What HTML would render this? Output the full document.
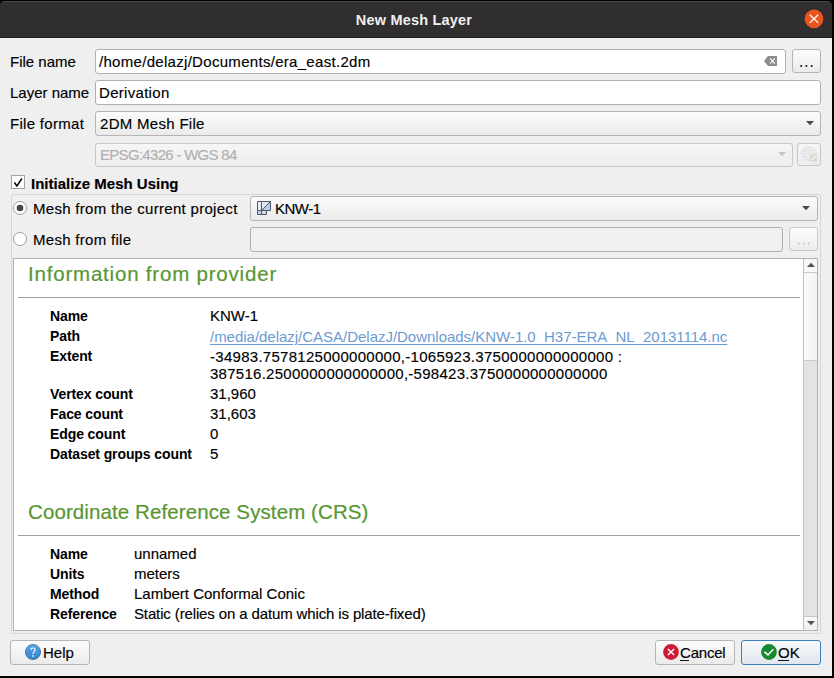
<!DOCTYPE html>
<html><head><meta charset="utf-8">
<style>
*{box-sizing:border-box;margin:0;padding:0}
html,body{width:834px;height:678px;overflow:hidden;background:#000}
body{position:relative;font-family:"Liberation Sans",sans-serif;font-size:15px;color:#111}
.a{position:absolute}
.t{position:absolute;white-space:nowrap;line-height:15px;font-size:15px;letter-spacing:0.3px;color:#000;-webkit-text-stroke:0.15px}
.l{position:absolute;white-space:nowrap;line-height:14px;font-size:14px;font-weight:bold;color:#000;letter-spacing:-0.1px}
.v{position:absolute;white-space:nowrap;line-height:15px;font-size:15px;color:#000;-webkit-text-stroke:0.15px}
.h{position:absolute;white-space:nowrap;line-height:20px;font-size:20.5px;color:#589632;-webkit-text-stroke:0.2px}
#title{left:0;top:1px;width:832px;height:37px;background:#302e2f;border-radius:5px 5px 0 0;border-top:1px solid #4b494a;border-bottom:1px solid #1f1e1f}
#body{left:0;top:38px;width:832px;height:638px;background:#efefef}
.inp{position:absolute;background:#fff;border:1px solid #b0b0b0;border-radius:3px}
.btn{position:absolute;background:linear-gradient(#fcfcfc,#ebebeb);border:1px solid #b5b5b5;border-radius:3px}
.dis{position:absolute;background:#f0f0f0;border:1px solid #c7c7c7;border-radius:3px}
svg{position:absolute;overflow:visible}
</style></head><body>
<div id="title" class="a"></div>
<div class="a" style="left:0;top:13px;width:832px;text-align:center;color:#f0f0f0;font-weight:bold;font-size:14.5px;line-height:15px;letter-spacing:0.2px;margin-left:-2px">New Mesh Layer</div>
<svg style="left:800px;top:4px" width="28" height="28" viewBox="0 0 28 28"><circle cx="14" cy="14.8" r="9.4" fill="#e95420"/><path d="M9.8 10.8L18.2 18.9M18.2 10.8L9.8 18.9" stroke="#fff" stroke-width="1.3"/></svg>
<div id="body" class="a"></div>

<!-- File name row -->
<div class="t" style="left:10px;top:54px;letter-spacing:0">File name</div>
<div class="inp" style="left:95px;top:49px;width:691px;height:25px"></div>
<div class="t" style="left:99px;top:54px">/home/delazj/Documents/era_east.2dm</div>
<svg style="left:764px;top:56px" width="14" height="10" viewBox="0 0 14 10"><path d="M0 5L4 0H13V10H4Z" fill="#8d8d8d"/><path d="M6.2 2.3L10.8 7.7M10.8 2.3L6.2 7.7" stroke="#fff" stroke-width="1.05"/></svg>
<div class="btn" style="left:792px;top:49px;width:29px;height:24px"></div>
<svg style="left:799px;top:64px" width="16" height="4" viewBox="0 0 16 4"><circle cx="2.2" cy="2" r="1" fill="#111"/><circle cx="7.4" cy="2" r="1" fill="#111"/><circle cx="12.7" cy="2" r="1" fill="#111"/></svg>

<!-- Layer name row -->
<div class="t" style="left:10px;top:85px;letter-spacing:0">Layer name</div>
<div class="inp" style="left:95px;top:80px;width:726px;height:25px"></div>
<div class="t" style="left:99px;top:85px">Derivation</div>

<!-- File format row -->
<div class="t" style="left:10px;top:116px">File format</div>
<div class="btn" style="left:95px;top:111px;width:726px;height:25px"></div>
<div class="t" style="left:100px;top:116px">2DM Mesh File</div>
<svg style="left:806px;top:121px" width="8" height="4" viewBox="0 0 8 4"><path d="M0 0H8L4 4.3Z" fill="#4a4a4a"/></svg>

<!-- CRS row -->
<div class="dis" style="left:95px;top:143px;width:698px;height:24px;background:linear-gradient(#f6f6f6,#ededed)"></div>
<div class="t" style="left:100px;top:147px;color:#b0b0b0;letter-spacing:-0.7px">EPSG:4326 - WGS 84</div>
<svg style="left:778px;top:152px" width="8" height="4" viewBox="0 0 8 4"><path d="M0 0H8L4 4.3Z" fill="#c6c6c6"/></svg>
<div class="dis" style="left:797px;top:143px;width:24px;height:23px;background:linear-gradient(#f6f6f6,#ededed)"></div>
<svg style="left:797px;top:143px" width="24" height="24" viewBox="0 0 24 24"><path d="M4.2 10.5C5 6 8.5 4 12 4C15.5 4 19 6 19.8 10.5C18.5 11.2 18 12 17.5 13C16.5 16.5 14.5 17.5 12 17.5C9 17.5 6.8 15.5 6.2 12.3C5.6 11.5 5 11 4.2 10.5Z" fill="#eceeef" stroke="#dadada" stroke-width="0.7"/><path d="M4.5 10.5H19.5M6 7.5H18M6.5 13.5H17M12 4V17.5M8.5 5C7.5 9 8 14 10 17M15.5 5C16.5 9 16 14 14 17" stroke="#d6d6d6" stroke-width="0.6" fill="none" stroke-dasharray="1 0.7"/><rect x="13" y="11.7" width="6.8" height="6.8" fill="#d9d6cc"/><path d="M14.5 17L18.5 13" stroke="#fafafa" stroke-width="1.2"/></svg>

<!-- Initialize checkbox -->
<div class="a" style="left:11px;top:175px;width:14px;height:14px;background:#fff;border:1px solid #a4a4a4"></div>
<svg style="left:13px;top:177px" width="10" height="10" viewBox="0 0 10 10"><path d="M1.4 5.5L3.9 9L8.9 1.5" stroke="#000" stroke-width="1.45" fill="none"/></svg>
<div class="t" style="left:31px;top:176px;font-weight:bold;letter-spacing:0">Initialize Mesh Using</div>

<!-- group box -->
<div class="a" style="left:11px;top:194px;width:810px;height:440px;border:1px solid #d6d6d6;border-radius:2px"></div>
<svg style="left:13px;top:201px" width="14" height="14" viewBox="0 0 14 14"><circle cx="7" cy="7" r="6.5" fill="#fff" stroke="#a0a0a0" stroke-width="1"/><circle cx="7" cy="7" r="3.3" fill="#444"/></svg>
<div class="t" style="left:33px;top:201px">Mesh from the current project</div>
<div class="btn" style="left:250px;top:196px;width:568px;height:25px"></div>
<svg style="left:257px;top:201px" width="14" height="14" viewBox="0 0 14 14"><rect x="0.5" y="0.5" width="4" height="9" fill="#e9eef4"/><path d="M4.5 0.5H13.5V9.5H4.5Z" fill="#b8cee6"/><path d="M4.5 0.5H13.5L4.5 9.5Z" fill="#dfe8f2"/><rect x="0.5" y="9.5" width="4" height="4" fill="#bcd2ea"/><rect x="4.5" y="9.5" width="5" height="4" fill="#d8d8d8"/><path d="M0.5 13.5V0.5H13.5V9.5H9.5V13.5Z" fill="none" stroke="#4f5b6b" stroke-width="1"/><path d="M4.5 0.5V13.5M0.5 9.5H9.5M4.5 9.5L13.5 0.5" stroke="#4f5b6b" stroke-width="1"/></svg>
<div class="t" style="left:275px;top:201px;letter-spacing:-0.5px">KNW-1</div>
<svg style="left:802px;top:206px" width="8" height="4" viewBox="0 0 8 4"><path d="M0 0H8L4 4.3Z" fill="#4a4a4a"/></svg>

<svg style="left:13px;top:232px" width="14" height="14" viewBox="0 0 14 14"><circle cx="7" cy="7" r="6.5" fill="#fff" stroke="#a0a0a0" stroke-width="1"/></svg>
<div class="t" style="left:33px;top:232px">Mesh from file</div>
<div class="dis" style="left:250px;top:227px;width:533px;height:25px;border-color:#aeaeae"></div>
<div class="dis" style="left:789px;top:227px;width:29px;height:24px;background:linear-gradient(#fdfdfd,#ececec)"></div>
<svg style="left:797px;top:242px" width="14" height="3" viewBox="0 0 14 3"><circle cx="1.8" cy="1.5" r="0.9" fill="#b9c3cc"/><circle cx="6.8" cy="1.5" r="0.9" fill="#b9c3cc"/><circle cx="11.6" cy="1.5" r="0.9" fill="#b9c3cc"/></svg>

<!-- info panel -->
<div class="a" style="left:13px;top:258px;width:805px;height:373px;background:#fff;border:1px solid #b2b2b2"></div>
<!-- scrollbar -->
<div class="a" style="left:803px;top:259px;width:14px;height:371px;background:#e3e3e3;border-left:1px solid #c0c0c0"></div>
<div class="a" style="left:804px;top:259px;width:13px;height:14px;background:#f8f8f8;border-bottom:1px solid #c8c8c8"></div>
<svg style="left:806.5px;top:263px" width="8" height="4" viewBox="0 0 8 4"><path d="M0 4H8L4 -0.3Z" fill="#555"/></svg>
<div class="a" style="left:804px;top:273px;width:13px;height:88px;background:linear-gradient(90deg,#fbfbfb,#f2f2f2);border-bottom:1px solid #c8c8c8"></div>
<div class="a" style="left:804px;top:616px;width:13px;height:14px;background:linear-gradient(#f8f8f8,#f0f0f0);border-top:1px solid #c8c8c8"></div>
<svg style="left:807px;top:621px" width="8" height="4" viewBox="0 0 8 4"><path d="M0 0H8L4 4.3Z" fill="#555"/></svg>

<div class="h" style="left:28px;top:264px;letter-spacing:0.8px">Information from provider</div>
<div class="a" style="left:18px;top:297px;width:782px;height:1px;background:#a0a0a0"></div>

<div class="l" style="left:50px;top:309px">Name</div>
<div class="v" style="left:210px;top:308px">KNW-1</div>
<div class="l" style="left:50px;top:329px">Path</div>
<div class="v" style="left:210px;top:329px;color:#6b9bd2;text-decoration:underline;text-underline-offset:1.6px;-webkit-text-stroke:0;letter-spacing:-0.02px">/media/delazj/CASA/DelazJ/Downloads/KNW-1.0_H37-ERA_NL_20131114.nc</div>
<div class="l" style="left:50px;top:349px">Extent</div>
<div class="v" style="left:210px;top:349px;letter-spacing:0.28px">-34983.7578125000000000,-1065923.3750000000000000 :</div>
<div class="v" style="left:210px;top:366px;letter-spacing:0.27px">387516.2500000000000000,-598423.3750000000000000</div>
<div class="l" style="left:50px;top:387px">Vertex count</div>
<div class="v" style="left:210px;top:386px">31,960</div>
<div class="l" style="left:50px;top:407px">Face count</div>
<div class="v" style="left:210px;top:406px">31,603</div>
<div class="l" style="left:50px;top:427px">Edge count</div>
<div class="v" style="left:210px;top:426px">0</div>
<div class="l" style="left:50px;top:447px">Dataset groups count</div>
<div class="v" style="left:210px;top:446px">5</div>

<div class="h" style="left:28px;top:502px;letter-spacing:0.1px">Coordinate Reference System (CRS)</div>
<div class="a" style="left:18px;top:535px;width:782px;height:1px;background:#a0a0a0"></div>
<div class="l" style="left:50px;top:547px">Name</div>
<div class="v" style="left:134px;top:546px">unnamed</div>
<div class="l" style="left:50px;top:567px">Units</div>
<div class="v" style="left:134px;top:566px">meters</div>
<div class="l" style="left:50px;top:587px">Method</div>
<div class="v" style="left:134px;top:586px">Lambert Conformal Conic</div>
<div class="l" style="left:50px;top:607px">Reference</div>
<div class="v" style="left:134px;top:606px;letter-spacing:-0.13px">Static (relies on a datum which is plate-fixed)</div>

<!-- bottom buttons -->
<div class="btn" style="left:10px;top:640px;width:80px;height:25px"></div>
<svg style="left:25px;top:644px" width="16" height="16" viewBox="0 0 16 16"><defs><linearGradient id="hg" x1="0" y1="0" x2="0" y2="1"><stop offset="0" stop-color="#5aa6e6"/><stop offset="1" stop-color="#2f82cf"/></linearGradient></defs><circle cx="8" cy="8" r="7.6" fill="url(#hg)" stroke="#2a5f95" stroke-width="0.7"/><path d="M5.9 6C5.9 3.3 10.1 3.3 10.1 6C10.1 7.6 8 7.9 8 9.9" stroke="#fff" stroke-width="1.1" fill="none"/><circle cx="8" cy="11.9" r="0.85" fill="#fff"/></svg>
<div class="t" style="left:43px;top:645px;letter-spacing:0">Help</div>
<div class="btn" style="left:655px;top:640px;width:80px;height:25px"></div>
<svg style="left:663px;top:644px" width="16" height="16" viewBox="0 0 16 16"><circle cx="8" cy="8" r="7.9" fill="#d01b34"/><path d="M4.9 4.9L11.1 11.1M11.1 4.9L4.9 11.1" stroke="#fff" stroke-width="1.45"/></svg>
<div class="t" style="left:680px;top:645px;letter-spacing:-0.2px">Cancel</div>
<div class="a" style="left:680px;top:660px;width:9px;height:1px;background:#111"></div>
<div class="btn" style="left:741px;top:640px;width:80px;height:25px;border-color:#3b80bd;background:linear-gradient(#f7f9fb,#e1e7ee)"></div>
<svg style="left:761px;top:644px" width="16" height="16" viewBox="0 0 16 16"><circle cx="8" cy="8" r="7.9" fill="#178a2e"/><path d="M3.4 7.9L7 10.9L12.3 5.3" stroke="#fff" stroke-width="1.5" fill="none"/></svg>
<div class="t" style="left:778px;top:645px;letter-spacing:0">OK</div>
<div class="a" style="left:778px;top:660px;width:11px;height:1px;background:#111"></div>
</body></html>
